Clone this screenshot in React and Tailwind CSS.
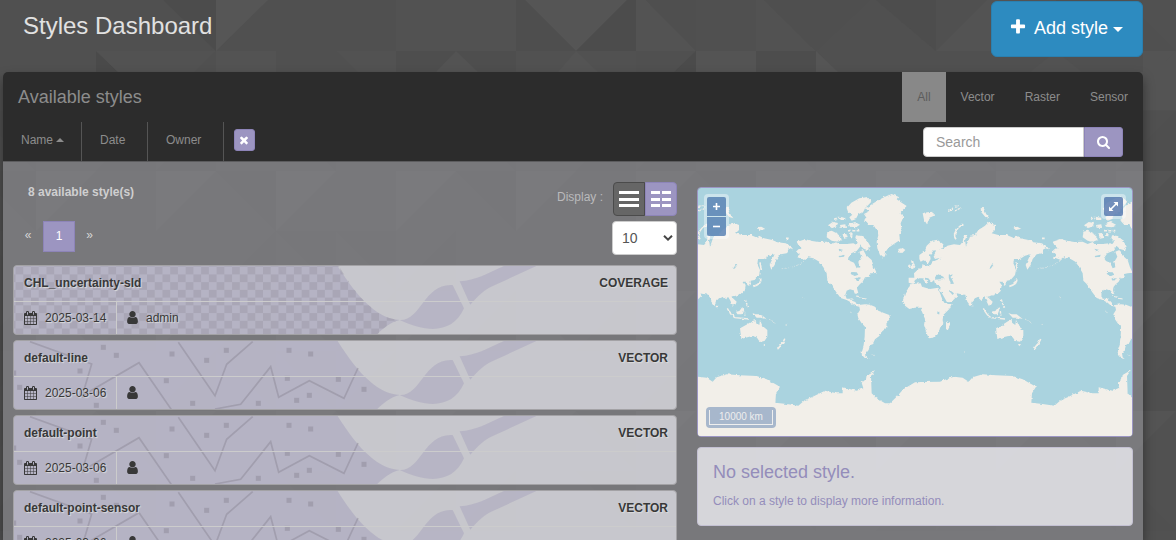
import React from 'react';

const ICONS = {
  plus: 'M1600 736v192q0 40-28 68t-68 28h-416v416q0 40-28 68t-68 28h-192q-40 0-68-28t-28-68v-416h-416q-40 0-68-28t-28-68v-192q0-40 28-68t68-28h416v-416q0-40 28-68t68-28h192q40 0 68 28t28 68v416h416q40 0 68 28t28 68z',
  search: 'M1216 832q0-185-131.5-316.5t-316.5-131.5-316.5 131.5-131.5 316.5 131.5 316.5 316.5 131.5 316.5-131.5 131.5-316.5zm512 832q0 52-38 90t-90 38q-54 0-90-38l-343-342q-179 124-399 124-143 0-273.5-55.5t-225-150-150-225-55.5-273.5 55.5-273.5 150-225 225-150 273.5-55.5 273.5 55.5 225 150 150 225 55.5 273.5q0 220-124 399l343 343q37 37 37 90z',
  times: 'M1490 1322q0 40-28 68l-136 136q-28 28-68 28t-68-28l-294-294-294 294q-28 28-68 28t-68-28l-136-136q-28-28-28-68t28-68l294-294-294-294q-28-28-28-68t28-68l136-136q28-28 68-28t68 28l294 294 294-294q28-28 68-28t68 28l136 136q28 28 28 68t-28 68l-294 294 294 294q28 28 28 68z',
  user: 'M1536 1399q0 109-62.5 187t-150.5 78h-854q-88 0-150.5-78t-62.5-187q0-85 8.5-160.5t31.5-152 58.5-131 94-89 134.5-34.5q131 128 313 128t313-128q76 0 134.5 34.5t94 89 58.5 131 31.5 152 8.5 160.5zm-256-887q0 159-112.5 271.5t-271.5 112.5-271.5-112.5-112.5-271.5 112.5-271.5 271.5-112.5 271.5 112.5 112.5 271.5z',
  calendar: 'M192 1664h288v-288h-288v288zm352 0h320v-288h-320v288zm-352-352h288v-320h-288v320zm352 0h320v-320h-320v320zm-352-384h288v-288h-288v288zm736 736h320v-288h-320v288zm-384-736h320v-288h-320v288zm768 736h288v-288h-288v288zm-384-352h320v-320h-320v320zm-352-864v-288q0-13-9.5-22.5t-22.5-9.5h-64q-13 0-22.5 9.5t-9.5 22.5v288q0 13 9.5 22.5t22.5 9.5h64q13 0 22.5-9.5t9.5-22.5zm736 864h288v-320h-288v320zm-384-384h320v-288h-320v288zm384 0h288v-288h-288v288zm32-480v-288q0-13-9.5-22.5t-22.5-9.5h-64q-13 0-22.5 9.5t-9.5 22.5v288q0 13 9.5 22.5t22.5 9.5h64q13 0 22.5-9.5t9.5-22.5zm384-64v1280q0 52-38 90t-90 38h-1408q-52 0-90-38t-38-90v-1280q0-52 38-90t90-38h128v-96q0-66 47-113t113-47h64q66 0 113 47t47 113v96h384v-96q0-66 47-113t113-47h64q66 0 113 47t47 113v96h128q52 0 90 38t38 90z',
};

function Icon({ name, className, viewBox = '0 0 1792 1792' }) {
  return (
    <svg viewBox={viewBox} fill="currentColor" className={className}>
      <path d={ICONS[name]} />
    </svg>
  );
}

/* Tiled triangle texture behind the whole page */
const TOP_SHAPES = [
  ['163,0 216,51 216,0', '#4c4c4c'],
  ['216,0 268,0 216,51', '#565656'],
  ['156,0 163,0 213,51 156,51', '#505050'],
  ['96,51 118,72 96,72', '#4a4a4a'],
  ['96,51 216,51 194,72 118,72', '#525252'],
  ['216,51 276,51 276,72 216,72', '#535353'],
  ['336,51 396,51 396,72 358,72', '#525252'],
  ['396,0 516,0 516,51 396,51', '#525252'],
  ['396,51 516,51 516,72 396,72', '#4e4e4e'],
  ['456,51 478,72 436,72', '#535353'],
  ['525,0 627,0 576,51', '#555555'],
  ['516,0 525,0 576,51 516,51', '#4e4e4e'],
  ['627,0 636,0 636,51 576,51', '#4c4c4c'],
  ['516,51 636,51 636,72 516,72', '#515151'],
  ['576,51 598,72 558,72', '#545454'],
  ['636,0 646,0 696,51 636,51', '#535353'],
  ['646,0 696,0 696,51', '#4f4f4f'],
  ['696,51 696,72 674,72', '#4b4b4b'],
  ['696,51 756,51 756,72 696,72', '#545454'],
  ['756,51 816,51 816,72 756,72', '#4d4d4d'],
  ['756,0 764,0 816,51 756,51', '#525252'],
  ['764,0 870,0 816,51', '#4f4f4f'],
  ['876,0 936,51 876,51', '#505050'],
  ['876,0 936,0 936,51', '#4d4d4d'],
  ['936,51 987,0 1056,0 1056,51', '#535353'],
  ['816,51 838,72 816,72', '#555555'],
  ['1056,51 1082,72 1030,72', '#525252'],
  ['1143,81 1176,51 1176,110 1143,110', '#545454'],
];

function Backdrop() {
  const cells = [];
  for (let r = 0; r < 9; r++) {
    for (let c = 0; c < 20; c++) {
      const n = (r * 37 + c * 61 + r * c * 17 + ((r * r * 7) ^ (c * c * 5))) % 8;
      const x = c * 60 - 24;
      const y = r * 60 - 9;
      const a = n < 4;
      const pts = a
        ? `${x},${y} ${x + 60},${y} ${x},${y + 60}`
        : `${x},${y} ${x + 60},${y + 60} ${x},${y + 60}`;
      cells.push(
        <g key={`${r}-${c}`}>
          <rect x={x} y={y} width="60" height="60" fill={n % 3 === 0 ? '#4f4f4f' : '#515151'} />
          <polygon points={pts} fill={n % 2 ? '#545454' : '#505050'} />
        </g>
      );
    }
  }
  return (
    <svg className="absolute inset-0 h-[540px] w-[1176px]" viewBox="0 0 1176 540">
      <rect width="1176" height="540" fill="#515151" />
      <g>{cells}</g>
      <rect width="1143" height="72" fill="#505050" />
      {TOP_SHAPES.map(([p, f]) => (
        <polygon key={p} points={p} fill={f} />
      ))}
    </svg>
  );
}

const DOTS = [
  [310, 52], [349, 76], [240, 123], [59, 172], [289, 226], [516, 72], [620, 91], [499, 152], [578, 220],
  [679, 61], [775, 220], [867, 61], [932, 72], [862, 145], [890, 211], [928, 196], [1015, 148], [1092, 178], [41, 129],
];

function CardArt({ kind }) {
  return (
    <svg className="absolute inset-0 h-full w-full" viewBox="3 3 1986 204" preserveAspectRatio="none">
      <defs>
        <pattern id="checker" x="54" y="5" width="46.4" height="46.4" patternUnits="userSpaceOnUse">
          <rect width="23.2" height="23.2" fill="#9d9aa8" />
          <rect x="23.2" y="23.2" width="23.2" height="23.2" fill="#9d9aa8" />
        </pattern>
      </defs>
      <path
        d="M0 0H972C1040 110 1100 162 1160 165C1130 172 1108 192 1090 210H0Z"
        fill="#a09bb8"
        fillOpacity=".44"
      />
      {kind === 'COVERAGE' ? (
        <path
          d="M0 0H976C1040 110 1100 162 1160 165C1130 172 1108 192 1092 210H0Z"
          fill="url(#checker)"
          fillOpacity=".5"
        />
      ) : (
        <g>
          <g fill="none" stroke="#85818f" strokeOpacity=".42" strokeWidth="5" transform="translate(-39 -30)">
            <polyline points="90,35 275,102 245,203" />
            <polyline points="245,198 417,98 515,240" />
            <polyline points="535,37 645,197 680,103 758,35" />
            <polyline points="645,237 722,223 812,110 836,202 928,152 1032,205 1074,114" />
          </g>
          <g fill="#85818f" fillOpacity=".42">
            {DOTS.map(([x, y]) => (
              <rect key={`${x}-${y}`} x={x - 46.5} y={y - 37.5} width="15" height="15" />
            ))}
          </g>
        </g>
      )}
      <g fill="#a09bb8" fillOpacity=".4">
        <path d="M1160 165C1225 168 1232 55 1319 60L1353 130C1320 205 1245 205 1160 165Z" />
        <path d="M1340 49C1390 46 1420 26 1473 3H1570L1438 64C1412 76 1395 93 1372 119Z" />
      </g>
    </svg>
  );
}

function StyleCard({ name, date, owner, kind }) {
  return (
    <div className="relative h-[70px] shrink-0 overflow-hidden rounded-[4px] border border-[#a3a2a5] bg-[rgba(226,226,232,0.75)] text-[#383838] [text-shadow:1px_1px_1px_#ddd]">
      <CardArt kind={kind} />
      <div className="relative flex h-[36px] items-center justify-between border-b border-[#cccccc] pr-[8px] pl-[10px] font-bold">
        <span>{name}</span>
        <span>{kind}</span>
      </div>
      <div className="relative flex h-[33px] items-center">
        <div className="flex h-full w-[103px] items-center border-r border-[#cccccc] pl-[10px]">
          <Icon name="calendar" viewBox="64 0 1664 1792" className="mt-[-2px] mr-[8px] h-[14px] w-[13px]" />
          <span>{date}</span>
        </div>
        <div className="flex items-center pl-[9px]">
          <Icon name="user" className="mt-[-2px] mr-[6px] ml-[-1px] h-[15px] w-[15px]" />
          <span>{owner}</span>
        </div>
      </div>
    </div>
  );
}

function Land() {
  return (
    <g fill="#f2efe9">
      <polygon points="320,185 345,177 362,182 385,186 410,185 425,192 440,186 445,192 470,192 490,190 500,195 505,180 515,185 510,200 500,213 484,220 474,235 480,243 492,248 500,265 508,262 505,245 514,230 508,215 520,210 528,225 545,240 552,262 560,278 545,280 535,282 540,290 525,292 518,305 510,312 503,320 501,328 505,343 499,341 495,332 480,328 470,332 466,345 470,356 480,356 488,355 486,362 496,366 502,376 512,374 525,373 540,374 555,380 565,392 580,398 598,405 600,415 590,430 588,445 575,455 568,468 555,478 550,488 540,495 536,510 528,520 530,532 536,537 525,535 516,525 515,515 521,495 524,470 525,440 515,430 505,415 502,403 510,390 508,380 495,377 485,368 470,360 452,354 440,338 428,320 420,310 412,302 410,280 400,262 388,245 370,235 355,232 345,240 322,232 330,225 318,215 325,208 335,205 325,195" />
      <polygon points="470,84 484,68 508,55 530,52 544,65 535,75 525,85 520,95 505,103 497,118 485,122 478,112 487,104 474,95" />
      <polygon points="498,166 515,168 530,180 542,200 535,205 540,212 522,207 512,198 506,185 496,174" />
      <polygon points="412,155 425,152 440,160 452,170 455,180 440,185 425,182 410,172" />
      <polygon points="414,136 428,126 444,129 440,139 426,145" />
      <polygon points="448,110 466,113 466,120 452,120" />
      <polygon points="476,133 495,126 510,134 498,142 480,140" />
      <polygon points="450,135 466,133 468,144 452,143" />
      <polygon points="457,160 468,159 473,174 462,176" />
      <polygon points="480,159 488,161 486,172 481,171" />
      <path d="M474 152H508M432 118L446 112" fill="none" stroke="#f2efe9" strokeWidth="5" strokeDasharray="9 4" />
      <polygon points="522,102 535,95 528,85 550,70 570,58 590,48 605,42 625,50 620,58 635,68 650,78 638,90 632,100 640,112 632,130 635,150 628,165 630,180 615,190 600,200 590,210 585,228 580,234 570,225 562,205 560,185 565,165 560,150 550,135 535,135 522,120 530,115" />
      <polygon points="625,207 638,204 646,210 637,219 626,217" />
      <g fill="#aad3df">
        <polygon points="484,276 500,277 505,284 494,288 482,282" />
        <polygon points="496,296 508,291 512,296 500,302" />
        <polygon points="446,206 460,210 448,214" />
        <polygon points="446,228 464,224 462,230 448,232" />
      </g>
      <g fill="none" stroke="#f2efe9" strokeWidth="3">
        <path d="M345 240Q325 262 275 266" strokeWidth="1.5" strokeDasharray="8 4" />
        <path d="M498 348L514 352M516 355L530 357" />
        <path d="M340 350l5 4M545 524l8 3M480 396l5 2" strokeWidth="1.5" />
      </g>
      <g transform="translate(510 15)">
        <polygon points="150,298 182,295 186,305 210,312 235,308 240,318 248,345 256,357 275,357 268,372 250,390 248,405 250,418 240,428 236,445 222,458 206,460 200,445 192,420 195,402 186,380 182,368 165,368 148,372 135,362 129,345 135,325 145,310" />
        <polygon points="146,293 146,278 163,278 162,265 175,253 186,246 188,236 194,244 212,240 218,230 232,224 245,218 235,220 225,222 220,214 228,200 222,195 210,210 212,222 205,235 200,238 195,228 190,226 182,230 178,222 178,210 192,200 200,182 215,168 232,164 250,178 250,188 240,190 252,192 262,182 282,178 300,180 308,170 312,150 322,150 315,165 318,185 325,165 330,152 345,150 355,135 375,122 385,112 405,120 405,135 395,145 415,150 440,150 460,158 465,152 480,160 505,165 520,172 545,175 560,183 567,193 555,190 548,205 530,208 518,222 512,240 502,254 497,240 505,222 512,208 495,212 480,222 462,222 460,238 468,255 465,270 452,285 440,287 440,300 432,302 428,290 418,290 425,300 422,318 415,325 395,332 382,335 398,350 395,358 386,362 378,345 372,335 365,345 355,335 345,340 335,350 332,364 322,350 315,330 290,325 292,333 280,345 260,356 250,342 240,318 242,305 225,296 222,285 215,292 205,280 195,278 205,292 198,296 188,280 175,280 165,285 160,297" />
        <g fill="#aad3df">
          <polygon points="225,276 235,268 250,275 254,283 240,283 226,284" />
          <polygon points="266,272 278,268 274,278 282,296 272,297 268,285" />
          <polygon points="237,316 242,318 262,353 258,358 248,345" />
          <polygon points="268,314 282,325 278,330 268,319" />
          <polygon points="388,250 396,238 400,240 392,251" />
          <polygon points="232,380 238,380 238,388 232,388" />
        </g>
        <polygon points="153,226 160,228 162,238 167,247 157,252 150,250 156,240" />
        <polygon points="145,240 152,238 151,248 144,250" />
        <polygon points="188,85 202,82 220,80 222,92 208,98 201,118 192,104" />
        <polygon points="362,70 371,68 378,86 388,100 376,96 364,82" />
        <polygon points="458,127 472,125 484,132 468,136" />
        <polygon points="258,415 270,408 270,422 262,438 258,430" />
        <polygon points="396,380 406,378 415,366 418,374 413,388 400,388" />
        <polygon points="445,384 455,388 470,388 488,402 472,398 458,398" />
        <polygon points="408,430 430,418 445,408 455,405 458,415 466,420 468,404 475,422 490,435 490,455 480,470 465,467 458,457 445,453 430,457 412,462" />
        <polygon points="474,477 483,477 478,484" />
        <g fill="none" stroke="#f2efe9">
          <path d="M288 163C276 148 292 126 310 118" strokeWidth="5" />
          <path d="M262 76L282 72M284 78L304 68M283 64L296 62" strokeWidth="4" strokeDasharray="7 3" />
          <path d="M470 280Q474 296 448 304M468 232L472 256" strokeWidth="5" />
          <path d="M370 370Q380 390 393 398L435 402" strokeWidth="4" />
          <path d="M424 343L428 356L434 368M421 378L423 392" strokeWidth="4" strokeDasharray="8 3" />
          <path d="M542 462L536 474L521 492M546 160h8M338 362v5" strokeWidth="5" />
          <path d="M495 402L518 416M545 420l6 -6M312 501h3" strokeWidth="2" strokeDasharray="5 4" />
        </g>
      </g>
      <polygon points="24,590 50,593 68,605 80,592 110,583 150,586 200,588 230,598 270,620 258,640 256,668 290,672 325,677 345,660 365,652 405,632 440,640 458,640 458,622 500,632 520,625 515,608 528,598 530,585 555,570 543,588 545,640 560,655 585,670 600,670 620,650 640,628 675,607 700,606 750,605 770,597 792,590 793,790 24,790" />
    </g>
  );
}

function WorldMap() {
  return (
    <svg className="absolute inset-0 h-full w-full bg-[#aad3df]" viewBox="24 24 1302 744" preserveAspectRatio="none">
      <defs>
        <filter id="coast" x="24" y="24" width="1302" height="744" filterUnits="userSpaceOnUse">
          <feTurbulence type="fractalNoise" baseFrequency="0.09" numOctaves="2" seed="4" />
          <feDisplacementMap in="SourceGraphic" scale="9" xChannelSelector="R" yChannelSelector="G" />
        </filter>
      </defs>
      <g filter="url(#coast)">
        {[-768, 0, 768].map((dx) => (
          <g key={dx} transform={`translate(${dx} 0)`}>
            <Land />
          </g>
        ))}
      </g>
      <rect x="20" y="700" width="1310" height="80" fill="#f2efe9" />
    </svg>
  );
}

function MapPanel() {
  return (
    <div className="relative h-[250px] w-[436px] overflow-hidden rounded-[4px] border border-[#9c96c4]">
      <WorldMap />
      <div className="absolute top-[6px] left-[6px] flex flex-col gap-px rounded-[4px] bg-white/40 p-[3px]">
        <div className="flex h-[19px] w-[19px] items-center justify-center rounded-t-[2px] bg-[rgba(80,124,176,0.8)]">
          <svg className="h-[7px] w-[7px]" viewBox="0 0 7 7"><path d="M3.5 0v7M0 3.5h7" stroke="#fff" strokeWidth="1.6" /></svg>
        </div>
        <div className="flex h-[19px] w-[19px] items-center justify-center rounded-b-[2px] bg-[rgba(80,124,176,0.8)]">
          <svg className="h-[7px] w-[7px]" viewBox="0 0 7 7"><path d="M0 3.5h7" stroke="#fff" strokeWidth="1.6" /></svg>
        </div>
      </div>
      <div className="absolute top-[6px] right-[6px] rounded-[4px] bg-white/40 p-[3px]">
        <div className="flex h-[19px] w-[19px] items-center justify-center rounded-[2px] bg-[rgba(80,116,172,0.8)]">
          <svg className="h-[9px] w-[9px]" viewBox="0 0 9 9" fill="#fff">
            <path d="M4.5 0H9V4.5ZM0 4.5V9H4.5Z" />
            <path d="M1.5 7.5L7.5 1.5" stroke="#fff" strokeWidth="1.6" />
          </svg>
        </div>
      </div>
      <div className="absolute bottom-[8px] left-[8px] rounded-[4px] bg-[#a7b7cc] p-[2px]">
        <div className="m-px h-[15px] w-[64px] border border-t-0 border-[#eee] text-center text-[10px] leading-[14px] text-[#eee]">10000 km</div>
      </div>
    </div>
  );
}

const STYLES = [
  { name: 'CHL_uncertainty-sld', date: '2025-03-14', owner: 'admin', kind: 'COVERAGE' },
  { name: 'default-line', date: '2025-03-06', owner: '', kind: 'VECTOR' },
  { name: 'default-point', date: '2025-03-06', owner: '', kind: 'VECTOR' },
  { name: 'default-point-sensor', date: '2025-03-06', owner: '', kind: 'VECTOR' },
];

export default function App() {
  return (
    <div className="relative h-[540px] w-[1176px] overflow-hidden bg-[#505050] font-['Liberation_Sans',Arial,sans-serif] text-[12px] leading-[17px]">
      <Backdrop />
      <div className="relative flex h-full w-[1143px] flex-col pl-[3px]">
        <header className="flex h-[72px] shrink-0 items-start justify-between pl-[20px]">
          <h1 className="mt-[12px] text-[24px] leading-[28px] text-[#e1e1e1]">Styles Dashboard</h1>
          <button className="mt-px flex h-[56px] w-[152px] items-center rounded-[6px] border border-[#2a80b0] bg-[#2d8bc0] pb-px pl-[17px] text-[18px] text-white">
            <Icon name="plus" className="mt-[-3px] mr-[7px] h-[18px] w-[18px]" />
            Add style
            <span className="mt-[2px] ml-[5px] border-x-[5px] border-t-[5px] border-x-transparent border-t-white" />
          </button>
        </header>

        <section className="flex w-[1140px] grow flex-col overflow-visible rounded-t-[5px] shadow-[0_6px_12px_rgba(0,0,0,0.4)]">
          <div className="flex h-[90px] shrink-0 flex-col rounded-t-[5px] border-b border-[#5c5c5e] bg-[#2c2c2c] text-[#8c8c8c]">
            <div className="flex h-[50px] items-center justify-between pl-[15px]">
              <h2 className="text-[18px]">Available styles</h2>
              <nav className="flex h-full leading-[50px]">
                <a className="bg-[#888] px-[15px] text-[#5c5c5c]">All</a>
                <a className="px-[15px]">Vector</a>
                <a className="px-[15px]">Raster</a>
                <a className="px-[15px]">Sensor</a>
              </nav>
            </div>
            <div className="flex h-[39px] pb-0 leading-[36px]">
              <div className="flex w-[79px] border-r border-[#555] pl-[18px]">
                Name
                <span className="mt-[16px] ml-[3px] h-0 border-x-4 border-b-4 border-x-transparent border-b-[#8c8c8c]" />
              </div>
              <div className="w-[66px] border-r border-[#555] pl-[18px]">Date</div>
              <div className="w-[76px] border-r border-[#555] pl-[18px]">Owner</div>
              <button className="mt-[7px] ml-[10px] flex h-[22px] w-[21px] items-center justify-center rounded-[3px] border border-[#8d84b8] bg-[#9c95c1] pr-px text-white">
                <Icon name="times" className="h-[12px] w-[12px]" />
              </button>
              <div className="mt-[5px] mr-[20px] ml-auto flex h-[30px]">
                <div className="w-[161px] rounded-l-[4px] border border-[#ccc] bg-white pl-[12px] text-[14px] leading-[28px] text-[#999]">Search</div>
                <button className="flex w-[39px] items-center justify-center rounded-r-[3px] border border-[#8d84b8] bg-[#9c95c1] text-white">
                  <Icon name="search" viewBox="64 128 1664 1664" className="h-[13px] w-[13px]" />
                </button>
              </div>
            </div>
          </div>

          <div className="flex grow items-start bg-[rgba(169,168,175,0.45)] pl-[10px]">
            <div className="flex h-[378px] w-[664px] flex-col overflow-hidden">
              <div className="flex h-[103px] shrink-0 justify-between">
                <div className="pl-[3px]">
                  <div className="mt-[22px] pl-[12px] font-bold text-[#cfcfd0]">8 available style(s)</div>
                  <div className="mt-[20px] flex h-[31px] text-center leading-[29px] text-[#d6d6d6]">
                    <span className="w-[27px] pr-[3px]">«</span>
                    <span className="w-[32px] border border-[#8d84b8] bg-[#9c95c1] text-white">1</span>
                    <span className="w-[29px]">»</span>
                  </div>
                </div>
                <div className="flex flex-col items-end pt-[20px]">
                  <div className="flex h-[34px] text-[#bababc]">
                    <span className="mr-[10px] leading-[31px]">Display :</span>
                    <button className="flex w-[32px] flex-col items-center justify-center gap-[3.5px] rounded-l-[4px] border border-[#4b4b4b] bg-[#666]">
                      <i className="h-[3px] w-[20px] bg-white" />
                      <i className="h-[3px] w-[20px] bg-white" />
                      <i className="h-[3px] w-[20px] bg-white" />
                    </button>
                    <button className="grid w-[32px] grid-cols-[9px_9px] content-center justify-center gap-x-[2px] gap-y-[3.5px] rounded-r-[4px] border border-[#8d84b8] bg-[#9c95c1]">
                      {[0, 1, 2, 3, 4, 5].map((i) => (
                        <i key={i} className="h-[3px] w-[9px] bg-white" />
                      ))}
                    </button>
                  </div>
                  <div className="mt-[5px] flex h-[34px] w-[65px] items-center justify-between rounded-[4px] border border-[#ccc] bg-white pr-[3px] pl-[9px] text-[14px] text-[#555]">
                    10
                    <svg className="h-[6px] w-[10px]" viewBox="0 0 10 6"><path d="M1 .8L5 4.6L9 .8" fill="none" stroke="#444" strokeWidth="2" /></svg>
                  </div>
                </div>
              </div>
              <div className="flex flex-col gap-[5px]">
                {STYLES.map((s) => (
                  <StyleCard key={s.name} {...s} />
                ))}
              </div>
            </div>

            <div className="ml-[20px] flex w-[436px] flex-col gap-[10px] pt-[25px]">
              <MapPanel />
              <div className="h-[79px] rounded-[4px] border border-[#c3c0d2] bg-[rgba(238,237,243,0.8)] px-[15px] text-[#948dba]">
                <h3 className="mt-[14px] text-[18px] leading-[20px]">No selected style.</h3>
                <p className="mt-[11px]">Click on a style to display more information.</p>
              </div>
            </div>
          </div>
        </section>
      </div>
    </div>
  );
}
